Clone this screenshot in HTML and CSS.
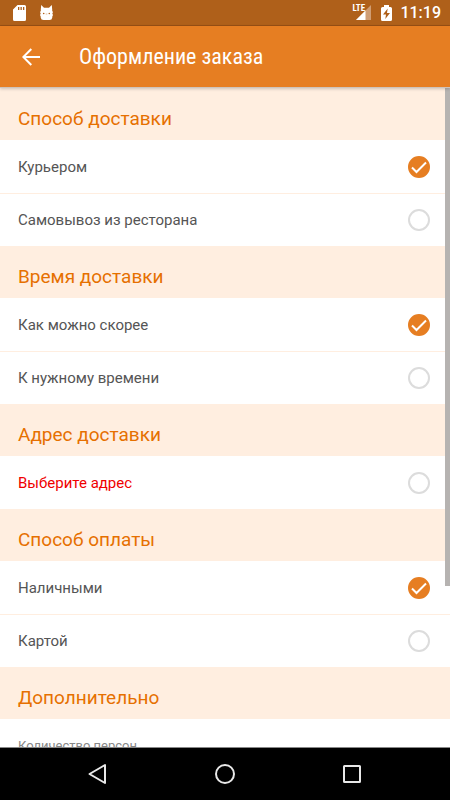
FILE: index.html
```html
<!DOCTYPE html>
<html lang="ru">
<head>
<meta charset="utf-8">
<meta name="viewport" content="width=device-width, initial-scale=1">
<title>Оформление заказа</title>
<link rel="stylesheet" href="styles.css">
</head>
<body>
<div class="status">
  <svg class="status-sd" width="13" height="16" viewBox="0 0 13 16" aria-hidden="true"><path fill="#fff" fill-rule="evenodd" d="M4.500 0H11.500Q13 0 13 1.500V14.500Q13 16 11.500 16H1.500Q0 16 0 14.500V4.500ZM5 2V5H6.300V2ZM7.500 2V5H8.800V2ZM10 2V5H11.300V2Z"/></svg>
  <svg class="status-cat" width="13" height="16" viewBox="0 0 13 16" aria-hidden="true"><path fill="#fff" d="M.8 4.500L1.200 0L4 2.800H9L11.800 0L12.200 4.500V6L13 7L12.300 8.500L13 10L12.300 11.500V12.500Q12 15 9.500 15H3.500Q1 15 .7 12.500V11.500L0 10L.7 8.500L0 7L.8 6Z"/><circle cx="3.700" cy="8.500" r=".8" fill="#af601a"/><circle cx="9.300" cy="8.500" r=".8" fill="#af601a"/><path d="M5.700 9h1.600" stroke="#d8b08c" stroke-width=".8"/></svg>
  <span class="status-space"></span>
  <span class="signal">
    <svg width="20" height="16" viewBox="0 0 20 16" aria-hidden="true"><path fill="#cf9d74" d="M19 0V15H4Z"/><path fill="#fff" d="M13.500 5.500V15H4Z"/></svg>
    <span class="lte">LTE</span>
  </span>
  <svg width="11" height="16" viewBox="0 0 11 16" aria-hidden="true"><path fill="#fff" d="M3 0H8V2H9.500Q11 2 11 3.500V14.500Q11 16 9.500 16H1.500Q0 16 0 14.500V3.500Q0 2 1.500 2H3Z"/><path fill="#af601a" d="M6.700 3.500L2 9.500H5L4.300 14L9 8H6Z"/></svg>
  <time class="clock">11:19</time>
</div>
<header class="appbar">
  <button class="back" type="button" aria-label="Назад"><svg width="18" height="18" viewBox="0 0 18 18" aria-hidden="true"><path d="M18 9H1.500M9.300 1L1.300 9L9.300 17" fill="none" stroke="#fff" stroke-width="2"/></svg></button>
  <h1 class="title">Оформление заказа</h1>
</header>
<main class="content">
  <form>
    <h2 class="heading">Способ доставки</h2>
    <div class="group">
      <label class="row"><span>Курьером</span><span class="mark"><input type="radio" name="delivery" checked><svg viewBox="0 0 22 22" aria-hidden="true"><path d="M4 11.500L8.500 16L18 6.500"/></svg></span></label>
      <label class="row"><span>Самовывоз из ресторана</span><span class="mark"><input type="radio" name="delivery"></span></label>
    </div>
    <h2 class="heading">Время доставки</h2>
    <div class="group">
      <label class="row"><span>Как можно скорее</span><span class="mark"><input type="radio" name="time" checked><svg viewBox="0 0 22 22" aria-hidden="true"><path d="M4 11.500L8.500 16L18 6.500"/></svg></span></label>
      <label class="row"><span>К нужному времени</span><span class="mark"><input type="radio" name="time"></span></label>
    </div>
    <h2 class="heading">Адрес доставки</h2>
    <div class="group">
      <label class="row row-error"><span>Выберите адрес</span><span class="mark"><input type="radio" name="address"></span></label>
    </div>
    <h2 class="heading">Способ оплаты</h2>
    <div class="group">
      <label class="row"><span>Наличными</span><span class="mark"><input type="radio" name="payment" checked><svg viewBox="0 0 22 22" aria-hidden="true"><path d="M4 11.500L8.500 16L18 6.500"/></svg></span></label>
      <label class="row"><span>Картой</span><span class="mark"><input type="radio" name="payment"></span></label>
    </div>
    <h2 class="heading">Дополнительно</h2>
    <div class="group">
      <p class="caption">Количество персон</p>
    </div>
  </form>
  <div class="scroll-thumb"></div>
</main>
<nav class="navbar">
  <button type="button" aria-label="Назад"><svg width="22" height="22" viewBox="0 0 22 22" aria-hidden="true"><path d="M18 2V20L2.500 11Z"/></svg></button>
  <button type="button" aria-label="Домой"><svg width="22" height="22" viewBox="0 0 22 22" aria-hidden="true"><circle cx="11" cy="11" r="9"/></svg></button>
  <button type="button" aria-label="Недавние"><svg width="22" height="22" viewBox="0 0 22 22" aria-hidden="true"><rect x="3" y="3" width="16" height="16" rx=".5"/></svg></button>
</nav>
</body>
</html>
```
FILE: styles.css
```css
* {
  box-sizing: border-box;
}

body {
  margin: 0;
  height: 100vh;
  display: flex;
  flex-direction: column;
  font-family: Roboto, "Liberation Sans", sans-serif;
  color: #555;
  background: #fff;
}

button {
  display: grid;
  place-items: center;
  padding: 0;
  border: 0;
  background: none;
}

.status {
  flex: none;
  display: flex;
  align-items: center;
  height: 26px;
  padding: 0 9px 0 13px;
  color: #fff;
  background: #af601a;
  border-bottom: 1px solid #985015;
}

.status-cat {
  margin-left: 14px;
}

.status-space {
  flex: 1;
}

.signal {
  position: relative;
  display: flex;
  margin-right: 9px;
}

.lte {
  position: absolute;
  top: -1px;
  left: 0;
  font: 700 9px/9px "Roboto Condensed", Roboto, sans-serif;
}

.clock {
  margin-left: 8px;
  font-size: 16px;
  font-weight: 500;
  line-height: 26px;
}

.appbar {
  position: relative;
  z-index: 1;
  flex: none;
  display: flex;
  align-items: center;
  height: 62px;
  padding-left: 22px;
  color: #fff;
  background: #e67e22;
  border-bottom: 1px solid #cfc3ba;
  box-shadow: 0 1px 3px rgba(0, 0, 0, 0.2);
}

.title {
  margin: 0 0 0 39px;
  font: 400 22px/28px "Roboto Condensed", Roboto, sans-serif;
}

.content {
  position: relative;
  flex: 1;
  min-height: 0;
  overflow: hidden;
}

.heading {
  height: 52px;
  margin: 0;
  padding: 18px 18px 0;
  font-size: 19px;
  font-weight: 400;
  line-height: 26px;
  color: #e67000;
  background: #ffeee0;
}

.row {
  display: flex;
  align-items: center;
  justify-content: space-between;
  height: 53px;
  padding: 0 20px 0 18px;
  font-size: 15px;
  line-height: 24px;
}

.row + .row {
  border-top: 1px solid #ffeee0;
}

.row-error {
  color: #f00000;
}

.mark {
  display: grid;
  width: 22px;
  height: 22px;
}

.mark > * {
  grid-area: 1 / 1;
}

.mark input {
  appearance: none;
  width: 22px;
  height: 22px;
  margin: 0;
  border: 2px solid #dcdcdc;
  border-radius: 50%;
}

.mark input:checked {
  border-color: #e67e22;
  background: #e67e22;
}

.mark svg {
  fill: none;
  stroke: #fff;
  stroke-width: 2;
  pointer-events: none;
}

.mark input:not(:checked) + svg {
  visibility: hidden;
}

.caption {
  margin: 0;
  padding: 18px 18px 0;
  font-size: 13px;
  line-height: 18px;
  color: #888;
}

.scroll-thumb {
  position: absolute;
  top: 0;
  right: 0;
  width: 5px;
  height: 75.5%;
  background: #b6b3b1;
}

.navbar {
  flex: none;
  display: grid;
  grid-template-columns: repeat(3, 1fr);
  height: 53px;
  padding: 0 35px;
  background: #000;
  border-top: 1px solid #888;
}

.navbar svg {
  fill: none;
  stroke: #e8e8e8;
  stroke-width: 2;
  stroke-linejoin: round;
}
```
